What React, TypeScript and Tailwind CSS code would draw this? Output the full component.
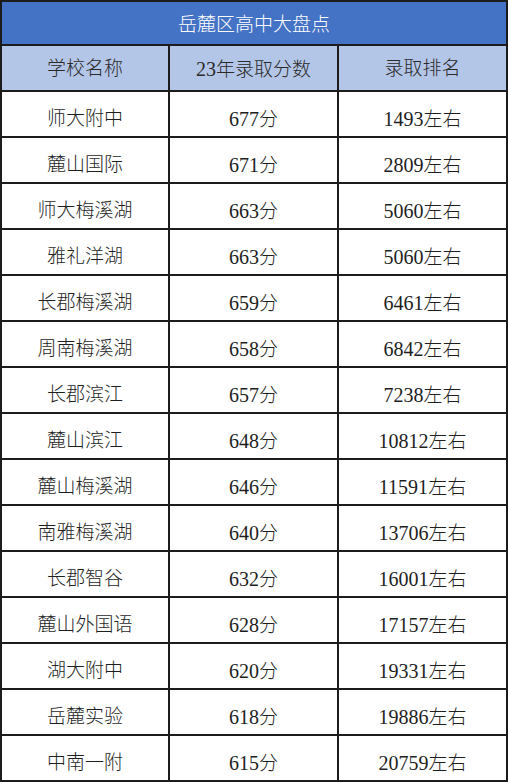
import React from "react";

const rows: [string, string, string][] = [
  ["师大附中", "677分", "1493左右"],
  ["麓山国际", "671分", "2809左右"],
  ["师大梅溪湖", "663分", "5060左右"],
  ["雅礼洋湖", "663分", "5060左右"],
  ["长郡梅溪湖", "659分", "6461左右"],
  ["周南梅溪湖", "658分", "6842左右"],
  ["长郡滨江", "657分", "7238左右"],
  ["麓山滨江", "648分", "10812左右"],
  ["麓山梅溪湖", "646分", "11591左右"],
  ["南雅梅溪湖", "640分", "13706左右"],
  ["长郡智谷", "632分", "16001左右"],
  ["麓山外国语", "628分", "17157左右"],
  ["湖大附中", "620分", "19331左右"],
  ["岳麓实验", "618分", "19886左右"],
  ["中南一附", "615分", "20759左右"],
];

const font = { fontFamily: '"Liberation Serif", "Noto Sans CJK SC", serif' };

function Mixed({ text }: { text: string }) {
  const m = text.match(/^(\d+)(.*)$/);
  if (!m) return <span>{text}</span>;
  return (
    <span>
      <span className="text-[20px]">{m[1]}</span>
      <span>{m[2]}</span>
    </span>
  );
}

export default function App() {
  return (
    <div className="w-[508px] bg-white">
      <div
        className="w-[508px] border-2 border-[#1c1c1c] text-[19px] font-light text-[#1e1e1e]"
        style={font}
      >
        <div className="h-[44px] border-b-2 border-[#1c1c1c] bg-[#4472c4] flex items-center justify-center pt-[4px] text-white">
          岳麓区高中大盘点
        </div>
        <div className="h-[46px] border-b-2 border-[#1c1c1c] bg-[#b4c6e7] grid grid-cols-[168px_169px_167px] text-[#2a2a2a]">
          <div className="border-r-2 border-[#1c1c1c] flex items-center justify-center pt-[3px]">学校名称</div>
          <div className="border-r-2 border-[#1c1c1c] flex items-center justify-center pt-[3px]">
            <Mixed text="23年录取分数" />
          </div>
          <div className="flex items-center justify-center pt-[3px]">录取排名</div>
        </div>
        {rows.map((r, i) => {
          const last = i === rows.length - 1;
          return (
            <div
              key={i}
              className={
                last
                  ? "h-[44px] grid grid-cols-[168px_169px_167px]"
                  : "h-[46px] border-b-2 border-[#1c1c1c] grid grid-cols-[168px_169px_167px]"
              }
            >
              <div className="border-r-2 border-[#1c1c1c] flex items-center justify-center pt-[10px]">{r[0]}</div>
              <div className="border-r-2 border-[#1c1c1c] flex items-center justify-center pt-[10px]">
                <Mixed text={r[1]} />
              </div>
              <div className="flex items-center justify-center pt-[10px]">
                <Mixed text={r[2]} />
              </div>
            </div>
          );
        })}
      </div>
    </div>
  );
}
